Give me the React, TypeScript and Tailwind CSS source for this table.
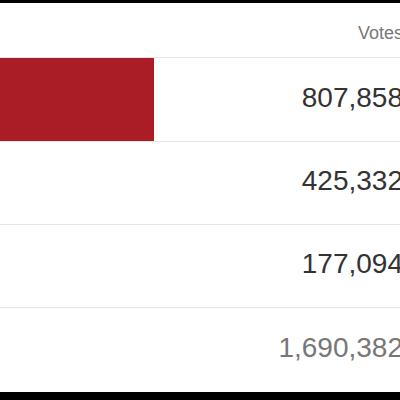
import React from "react";

const rows = [
  { votes: "807,858", bar: true, h: "h-[84px]" },
  { votes: "425,332", bar: false, h: "h-[83px]" },
  { votes: "177,094", bar: false, h: "h-[83px]" },
];

export default function App() {
  return (
    <div className="w-[400px] h-[400px] overflow-hidden bg-black flex flex-col" style={{ fontFamily: '"Liberation Sans", Arial, sans-serif' }}>
      <div className="h-[3px] shrink-0" />
      <div className="bg-white w-[403px] flex flex-col">
        <div className="h-[55px] border-b border-[#e6e6e6] flex items-end justify-end pb-[10px] text-[18px] text-[#777]">
          Votes
        </div>
        {rows.map((r, i) => (
          <div key={i} className={`${r.h} border-b border-[#e6e6e6] flex items-stretch`}>
            <div className="w-[154px] shrink-0 flex">
              {r.bar && <div className="bg-[#aa1d26] w-full" />}
            </div>
            <div className="flex-1 flex items-center justify-end text-[28px] text-[#333] pb-[4px]">
              {r.votes}
            </div>
          </div>
        ))}
        <div className="h-[84px] flex items-center justify-end text-[28px] text-[#777] pb-[4px]">
          1,690,382
        </div>
      </div>
    </div>
  );
}
